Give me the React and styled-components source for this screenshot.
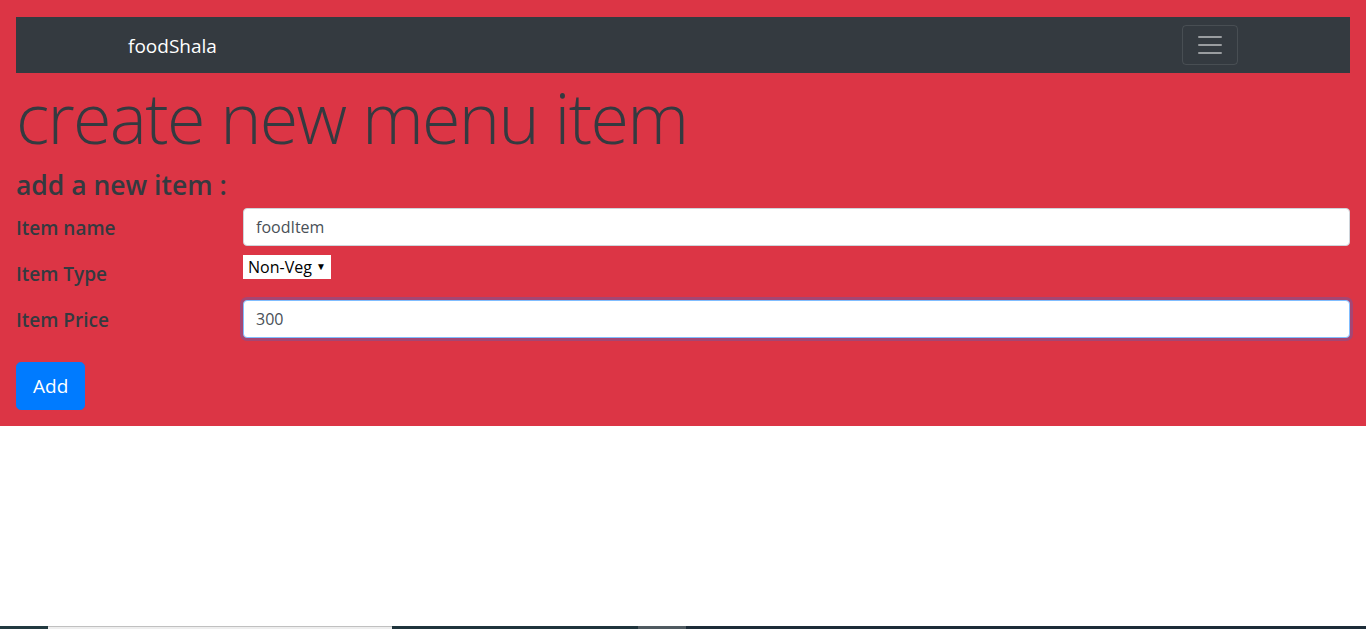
import React from "react";
import styled, { createGlobalStyle } from "styled-components";

const GlobalStyle = createGlobalStyle`
  html, body {
    margin: 0;
    padding: 0;
    background: #fff;
  }
  body {
    font-family: "Open Sans", "Noto Sans", Arial, sans-serif;
    font-size: 16px;
    color: #212529;
  }
  * {
    box-sizing: border-box;
  }
`;

const App = () => {
  return (
    <Page>
      <GlobalStyle />
      <RedSection>
        <Navbar>
          <NavContainer>
            <Brand href="#">foodShala</Brand>
            <Toggler aria-label="Toggle navigation">
              <svg width="30" height="30" viewBox="0 0 30 30">
                <path
                  d="M4 7h22M4 15h22M4 23h22"
                  stroke="rgba(255,255,255,0.5)"
                  strokeWidth="2"
                  strokeLinecap="round"
                />
              </svg>
            </Toggler>
          </NavContainer>
        </Navbar>

        <Title>create new menu item</Title>
        <SubTitle>add a new item :</SubTitle>

        <Form onSubmit={(e) => e.preventDefault()}>
          <FormRow>
            <Label>Item name</Label>
            <Field>
              <Input type="text" defaultValue="foodItem" />
            </Field>
          </FormRow>
          <FormRow>
            <Label>Item Type</Label>
            <Field>
              <SelectWrap>
                <Select defaultValue="Non-Veg">
                  <option>Veg</option>
                  <option>Non-Veg</option>
                </Select>
              </SelectWrap>
            </Field>
          </FormRow>
          <FormRow>
            <Label>Item Price</Label>
            <Field>
              <Input type="text" defaultValue="300" focused />
            </Field>
          </FormRow>
          <AddButton type="submit">Add</AddButton>
        </Form>
      </RedSection>

      <Spacer />
      <Taskbar>
        <TaskSegment width="48px" color="#223a40" />
        <TaskSegment width="344px" color="#eeeeee" border="#c0c0c0" />
        <TaskSegment width="246px" color="#1f343c" />
        <TaskSegment width="48px" color="#4f5a60" />
        <TaskSegment grow color="#1d2c38" />
      </Taskbar>
    </Page>
  );
};

export default App;

const Page = styled.div`
  min-height: 100vh;
  display: flex;
  flex-direction: column;
`;

const RedSection = styled.div`
  background-color: #dc3545;
  padding: 17px 16px 16px;
`;

const Navbar = styled.nav`
  background-color: #343a40;
  height: 56px;
  padding: 8px 16px;
`;

const NavContainer = styled.div`
  max-width: 1140px;
  margin: 0 auto;
  padding: 0 15px;
  height: 40px;
  display: flex;
  align-items: center;
  justify-content: space-between;
`;

const Brand = styled.a`
  color: #fff;
  font-size: 19px;
  line-height: 30px;
  text-decoration: none;
  margin-top: 2px;
`;

const Toggler = styled.button`
  width: 56px;
  height: 40px;
  padding: 4px 12px;
  background: transparent;
  border: 1px solid rgba(255, 255, 255, 0.1);
  border-radius: 4px;
  display: flex;
  align-items: center;
  justify-content: center;
  cursor: pointer;
`;

const Title = styled.h1`
  margin: 2px 0 12px;
  font-size: 70px;
  font-weight: 300;
  line-height: 84px;
  color: #343a40;
  letter-spacing: -1.7px;
`;

const SubTitle = styled.h4`
  margin: 0 0 8px;
  font-size: 26.5px;
  font-weight: 600;
  line-height: 29px;
  color: #343a40;
`;

const Form = styled.form`
  display: flex;
  flex-direction: column;
  align-items: flex-start;
`;

const FormRow = styled.div`
  width: 100%;
  display: grid;
  grid-template-columns: 227px 1fr;
  height: 38px;
  margin-bottom: 8px;
`;

const Label = styled.label`
  padding-top: 7px;
  font-size: 19px;
  font-weight: 600;
  line-height: 26px;
  color: #343a40;
`;

const Field = styled.div`
  min-width: 0;
`;

const Input = styled.input`
  width: 100%;
  height: 38px;
  padding: 6px 12px;
  font-family: inherit;
  font-size: 16px;
  color: #495057;
  background: #fff;
  border: 1px solid ${({ focused }) => (focused ? "#80bdff" : "#ced4da")};
  border-radius: 4px;
  box-shadow: ${({ focused }) =>
    focused ? "0 0 0 3px rgba(0, 123, 255, 0.25)" : "none"};
  outline: none;
`;

const SelectWrap = styled.div`
  position: relative;
  display: inline-block;
  margin-top: 1px;

  &::after {
    content: "▼";
    position: absolute;
    right: 5px;
    top: 4px;
    font-size: 10px;
    color: #000;
    pointer-events: none;
  }
`;

const Select = styled.select`
  appearance: none;
  -webkit-appearance: none;
  width: 88px;
  height: 24px;
  padding: 0 4px;
  font-family: inherit;
  font-size: 16px;
  color: #000;
  background: #fff;
  border: 1px solid #fff;
  border-radius: 0;
  outline: none;
`;

const AddButton = styled.button`
  margin-top: 16px;
  padding: 8px 16px;
  font-family: inherit;
  font-size: 19px;
  line-height: 30px;
  color: #fff;
  background-color: #007bff;
  border: 1px solid #007bff;
  border-radius: 4.8px;
  cursor: pointer;
`;

const Spacer = styled.div`
  flex: 1;
`;

const Taskbar = styled.div`
  display: flex;
  height: 3px;
`;

const TaskSegment = styled.div`
  width: ${({ width }) => width || "auto"};
  flex: ${({ grow }) => (grow ? 1 : "none")};
  background-color: ${({ color }) => color};
  border-top: ${({ border }) => (border ? `1px solid ${border}` : "none")};
`;
